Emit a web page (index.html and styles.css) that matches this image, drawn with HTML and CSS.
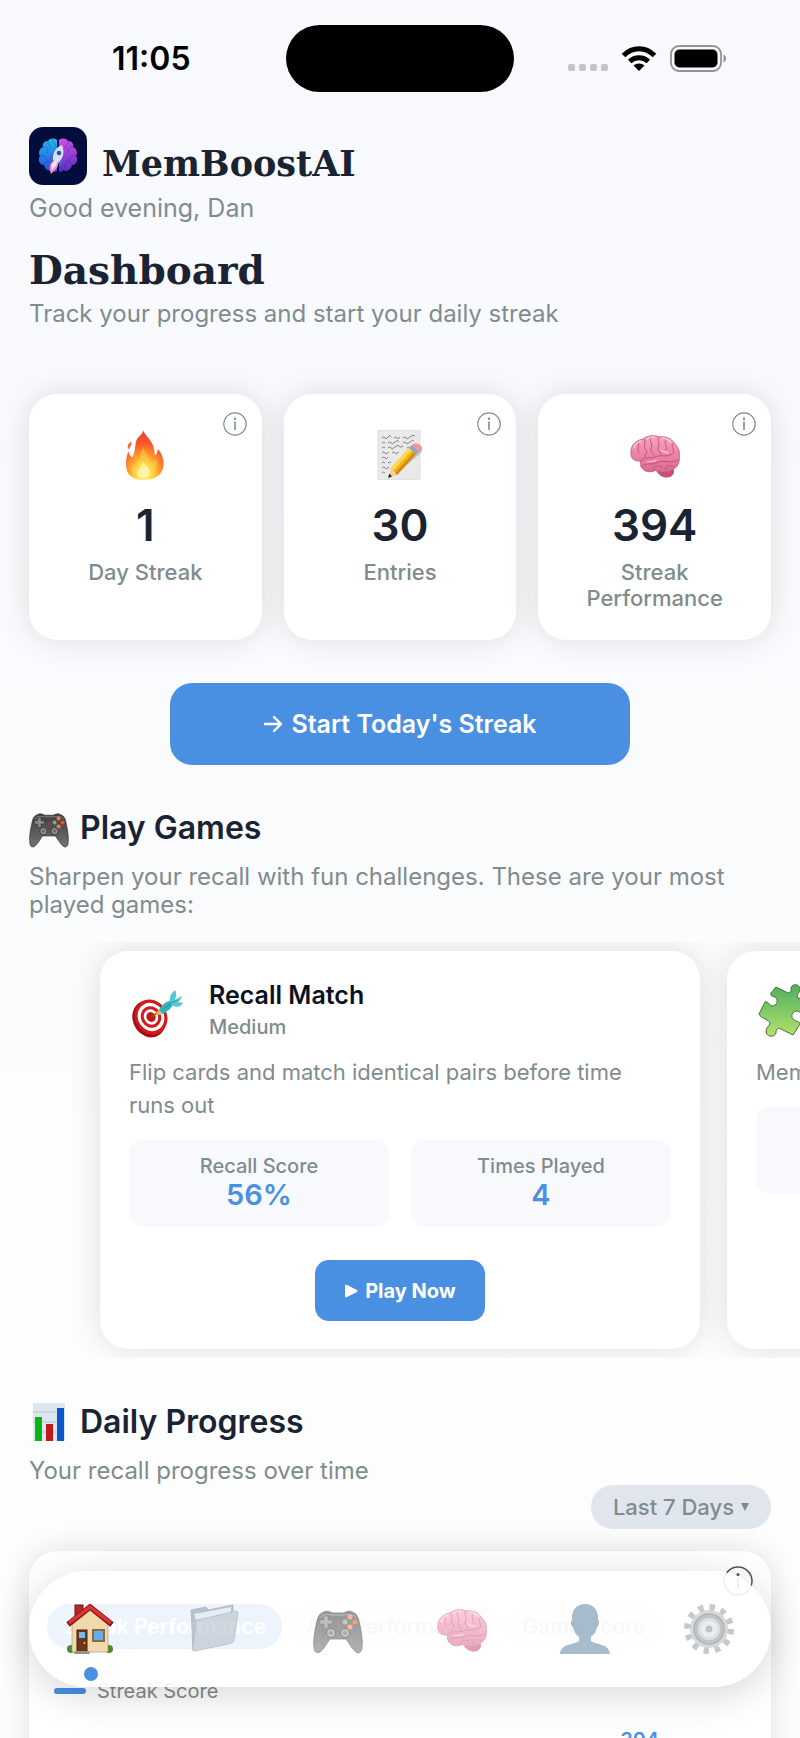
FILE: index.html
```html
<!DOCTYPE html>
<html lang="en">
<head>
    <meta charset="UTF-8">
    <meta name="viewport" content="width=device-width, initial-scale=1.0">
    <title>MemBoostAI</title>
    <link rel="stylesheet" href="styles.css">
</head>
<body>

<!-- Shared icons -->
<svg class="sprite" aria-hidden="true">
    <defs>
        <linearGradient id="brainFill" x1="0" y1="0" x2="0" y2="1">
            <stop offset="0" stop-color="#f9a3bd"/>
            <stop offset="1" stop-color="#d9608a"/>
        </linearGradient>
        <linearGradient id="padFill" x1="0" y1="0" x2="0" y2="1">
            <stop offset="0" stop-color="#3c3c3c"/>
            <stop offset="1" stop-color="#737373"/>
        </linearGradient>
    </defs>
    <symbol id="brain" viewBox="0 0 50 50">
        <path fill="url(#brainFill)" stroke="#c2557a" stroke-width=".8" d="M1 23C0 16 6 10 13 9C18 5 25 5 29 7C36 6 42 9 44 13C49 17 51 25 49 31C49 35 46 38 43 39C45 43 42 47 38 47C33 48 28 44 26 40C21 43 14 42 12 38C10 36 10 33 11 31C5 32 0 28 1 23Z"/>
        <path fill="#c4507b" d="M28 41C33 43 39 42 43 39C45 43 42 47 38 47C33 48 29 45 28 41Z"/>
        <path fill="none" stroke="#c4537c" stroke-width="1" stroke-linecap="round" d="M11 31C14 26 20 29 25 27C31 24 37 28 42 24M12 36C17 32 23 36 29 32C34 30 40 34 48 30M8 13C10 16 6 19 9 23M14 9C17 13 12 17 16 20C18 23 14 25 15 27M21 7C18 11 24 14 21 19C20 22 23 23 24 25M29 7C26 11 31 14 28 18C27 21 31 22 31 25M36 10C33 13 38 16 36 20M43 14C40 18 46 20 43 24M24 40C22 36 29 35 32 37M36 40C34 36 41 34 44 37"/>
        <path fill="none" stroke="#ffd0dd" stroke-width="1.1" stroke-linecap="round" d="M4 18C5 14 8 12 11 11M17 9C19 7 23 7 25 7M32 8C36 8 39 10 41 12M17 32C20 31 23 32 26 30M31 20C33 23 36 21 38 23"/>
    </symbol>
    <symbol id="gamepad" viewBox="0 0 50 50">
        <g transform="translate(0 2)">
            <path fill="url(#padFill)" stroke="#333" stroke-width=".8" d="M11 6C14 4 17 6 20 7H30C33 6 36 4 39 6C43 7 45 10 46 15C48 24 50 33 49 41C49 46 46 48 43 46C39 43 36 37 33 33H17C14 37 11 43 7 46C4 48 1 46 1 41C0 33 2 24 4 15C5 10 7 7 11 6Z"/>
            <path fill="none" stroke="#909090" stroke-width="1" d="M7 12C9 8 14 8 18 9H32C36 8 41 8 43 12"/>
            <path fill="#8b8b8b" stroke="#333" stroke-width=".5" d="M11 10h4v4h4v4h-4v4h-4v-4H7v-4h4z"/>
            <circle cx="37" cy="11" r="2.5" fill="#ff7a3c"/>
            <circle cx="42" cy="16" r="2.5" fill="#f5501e"/>
            <circle cx="32" cy="16" r="2.5" fill="#9a9a9a"/>
            <circle cx="37" cy="21" r="2.5" fill="#ff7a3c"/>
            <circle cx="18" cy="27" r="4.5" fill="#999" stroke="#2b2b2b"/>
            <circle cx="32" cy="27" r="4.5" fill="#999" stroke="#2b2b2b"/>
            <circle cx="18" cy="27" r="2" fill="#666"/>
            <circle cx="32" cy="27" r="2" fill="#666"/>
            <circle cx="25" cy="18" r="1.3" fill="#c33"/>
        </g>
    </symbol>
    <symbol id="info" viewBox="0 0 24 24">
        <circle cx="12" cy="12" r="11.2" fill="none" stroke="currentColor" stroke-width="1.2"/>
        <circle cx="12" cy="6.7" r="1.2" fill="currentColor"/>
        <path stroke="currentColor" stroke-width="1.6" d="M12 9.5V18"/>
    </symbol>
</svg>

<div class="screen">
    <div class="status-bar">
        <span class="time">11:05</span>
        <span class="island"></span>
        <span class="status-icons">
            <span class="signal"><i></i><i></i><i></i><i></i></span>
            <svg width="36" height="27" viewBox="0 0 36 27" aria-hidden="true">
                <g fill="none" stroke="#000" stroke-width="5">
                    <path d="M2.5 10.5C11.5 1.5 24.5 1.5 33.5 10.5"/>
                    <path d="M8.7 16.5C14 11.5 22 11.5 27.3 16.5"/>
                </g>
                <path d="M12.5 20.5C15.5 17.7 20.5 17.7 23.5 20.5L18 26Z"/>
            </svg>
            <svg width="57" height="27" viewBox="0 0 57 27" aria-hidden="true">
                <rect x="1" y="1" width="50" height="25" rx="8" fill="none" stroke="#929294" stroke-width="1.8"/>
                <rect x="4.5" y="4.5" width="43" height="18" rx="5"/>
                <path fill="#929294" d="M53.5 9.5C56.8 10.5 56.8 16.5 53.5 17.5Z"/>
            </svg>
        </span>
    </div>

    <main>
        <header>
            <div class="brand">
                <svg class="logo" viewBox="0 0 58 58" aria-hidden="true">
                    <defs>
                        <linearGradient id="logoLeft" x1="0" y1="0" x2="0" y2="1">
                            <stop offset="0" stop-color="#25b8ee"/>
                            <stop offset="1" stop-color="#2250dd"/>
                        </linearGradient>
                        <linearGradient id="logoRight" x1="0" y1="0" x2="0" y2="1">
                            <stop offset="0" stop-color="#cc4fe6"/>
                            <stop offset="1" stop-color="#5b2cc4"/>
                        </linearGradient>
                    </defs>
                    <rect width="58" height="58" rx="14" fill="#030d3b"/>
                    <path fill="url(#logoLeft)" d="M28 13C24 10 20 12 19 14C15 14 13 17 14 20C10 22 9 26 11 29C8 33 11 38 15 38C16 43 21 45 24 43C26 46 28 45 28 43Z"/>
                    <path fill="url(#logoRight)" d="M30 13C34 10 38 12 39 14C43 14 45 17 44 20C48 22 49 26 47 29C50 33 47 38 43 38C42 43 37 45 34 43C32 46 30 45 30 43Z"/>
                    <g fill="none" stroke="#0b2a86" stroke-width=".6" opacity=".5">
                        <path d="M19 14C18 18 23 19 22 22M14 20C18 19 20 23 18 26M11 29C15 27 18 30 17 33M15 38C15 34 20 33 22 36M24 12C23 16 27 17 27 20"/>
                        <path d="M39 14C40 18 35 19 36 22M44 20C40 19 38 23 40 26M47 29C43 27 40 30 41 33M43 38C43 34 38 33 36 36M37 42C34 40 36 37 38 37"/>
                    </g>
                    <path fill="#ff7fce" d="M25 33C20 36 20 42 22 47C26 43 30 41 29 35Z"/>
                    <path fill="#ffe3ec" d="M25 34C22 37 22 40 23 43C26 40 28 38 28 35Z"/>
                    <path fill="#4a62c4" d="M24 27L20 32L22 36L25 33ZM32 30L34 35L31 39L28 35Z"/>
                    <path fill="#d5e0fb" d="M33 18C27 20 23 27 24 33L29 36C34 32 36 25 33 18Z"/>
                    <circle cx="30" cy="26" r="2.3" fill="#2b4fb4"/>
                </svg>
                <span class="brand-name">MemBoostAI</span>
            </div>
            <p class="greeting">Good evening, Dan</p>
            <h1>Dashboard</h1>
            <p class="subtitle">Track your progress and start your daily streak</p>
        </header>

        <section class="stats">
            <div class="card stat">
                <button class="info-btn" aria-label="About day streak"><svg><use href="#info"/></svg></button>
                <svg class="emoji" viewBox="-5 0 50 51" aria-hidden="true">
                    <defs>
                        <radialGradient id="flame" cx=".48" cy=".9" r=".8">
                            <stop offset="0" stop-color="#fffbb0"/>
                            <stop offset=".25" stop-color="#ffe04a"/>
                            <stop offset=".5" stop-color="#ffa02e"/>
                            <stop offset=".78" stop-color="#fb5a2a"/>
                            <stop offset="1" stop-color="#f0462a"/>
                        </radialGradient>
                    </defs>
                    <path fill="url(#flame)" d="M18 0C20 6 28 11 29 19C30 22 30 25 30 26C32 24 33 22 33 19C39 26 40 34 38 40C36 46 30 51 19 51C8 51 2 46 1 39C0 33 1 27 3 22C4 25 5 27 7 28C11 22 9 15 12 9C15 5 18 4 18 0Z"/>
                    <path fill="#fb6a3c" d="M6 12C7 16 4 17 4 20C1 18 2 14 6 12Z"/>
                    <path fill="#ffd84a" opacity=".45" d="M18 18C20 24 25 27 26 33C30 33 30 30 31 29C34 39 29 50 19 50C9 50 5 42 7 34C8 37 10 38 12 38C16 31 14 24 18 18Z"/>
                    <path fill="#fffbc4" opacity=".7" d="M18 32C21 37 26 40 25 45C23 50 15 50 12 46C11 41 17 38 18 32Z"/>
                </svg>
                <strong>1</strong>
                <span>Day Streak</span>
            </div>
            <div class="card stat">
                <button class="info-btn" aria-label="About entries"><svg><use href="#info"/></svg></button>
                <svg class="emoji" viewBox="0 0 50 50" aria-hidden="true">
                    <rect x="3" y="0" width="42" height="50" fill="#e9e9e9" stroke="#d2d2d2" stroke-width=".6"/>
                    <path fill="none" stroke="#555" stroke-width=".7" d="M7 8q2-2 3 0t3-1 3 0M19 8q2-2 3 0t3-1M28 8q2-2 3 0t4-1 5-1M7 13q2-2 3 0M13 13q2-2 3 0t4-1 4 0M28 13q2-2 3 0t4-1 4-1M7 18q2-2 3 0M13 18q2-2 3 0t4-1 4-1 4 0M32 18q2-2 3 0M7 23q2-2 3 0t4-1M17 23q2-2 3 0t4-1M7 28q2-2 3 0t3-1M7 33q2-2 3 0M13 33q2-2 3 0M7 38q2-2 3 0t4-1M7 43q2-2 3 0"/>
                    <path fill="#777" opacity=".35" d="M18 47L47 22L45 19L25 40Z"/>
                    <path fill="#f2b21c" d="M16 38L36 16L43 22L22 45Z"/>
                    <path fill="#ffd84a" d="M16 38L36 16L39 18L18 41Z"/>
                    <path fill="#d48b10" d="M20 43L41 20L43 22L22 45Z"/>
                    <path fill="#f1cf9b" d="M16 38L22 45L14 47Z"/>
                    <path fill="#222" d="M14.5 43.5L17 46.5L13 48Z"/>
                    <path fill="#8fa5cf" d="M34 18L38 14L45 20L41 24Z"/>
                    <path fill="#f3949b" d="M37 15L41 13Q48 15 47 20L44 22Z"/>
                </svg>
                <strong>30</strong>
                <span>Entries</span>
            </div>
            <div class="card stat">
                <button class="info-btn" aria-label="About streak performance"><svg><use href="#info"/></svg></button>
                <svg class="emoji" aria-hidden="true"><use href="#brain"/></svg>
                <strong>394</strong>
                <span>Streak Performance</span>
            </div>
        </section>

        <button class="start-btn">
            <svg width="20" height="20" viewBox="0 0 20 20" fill="none" stroke="currentColor" stroke-width="2.4" stroke-linecap="round" stroke-linejoin="round" aria-hidden="true"><path d="M2 10H18M11 3L18 10L11 17"/></svg>
            Start Today's Streak
        </button>

        <section>
            <h2><svg aria-hidden="true"><use href="#gamepad"/></svg>Play Games</h2>
            <p class="section-text">Sharpen your recall with fun challenges. These are your most played games:</p>
        </section>
    </main>

    <div class="games">
        <article class="card game">
            <div class="game-head">
                <svg viewBox="0 0 58 58" aria-hidden="true">
                    <ellipse cx="20" cy="38" rx="16" ry="19" transform="rotate(-28 20 38)" fill="#a30d12"/>
                    <g transform="rotate(-28 22 36)">
                        <ellipse cx="22" cy="36" rx="16" ry="18" fill="#d3191e"/>
                        <ellipse cx="22" cy="36" rx="13" ry="14.500" fill="#fff"/>
                        <ellipse cx="22" cy="36" rx="10" ry="11" fill="#d3191e"/>
                        <ellipse cx="22" cy="36" rx="7" ry="8" fill="#fff"/>
                        <ellipse cx="22" cy="36" rx="4.500" ry="5" fill="#c1161b"/>
                    </g>
                    <path stroke="#8a5a12" stroke-width="1.5" d="M22 36L30 31"/>
                    <path fill="#e9b32a" d="M27 31L31 29L32 34L28 34Z"/>
                    <path fill="#35b3c1" d="M30 29C33 23 38 20 43 19L45 22C43 27 38 31 33 33Z"/>
                    <path fill="#54c8d3" d="M41 20C40 15 43 12 46 9C48 13 47 16 46 19L53 15C52 18 51 19 49 21L54 22C52 26 48 27 43 24Z"/>
                    <path fill="none" stroke="#1f8d9b" stroke-width=".8" d="M34 28L44 21L49 19"/>
                </svg>
                <div>
                    <h3>Recall Match</h3>
                    <p>Medium</p>
                </div>
            </div>
            <p class="game-text">Flip cards and match identical pairs before time runs out</p>
            <div class="scores">
                <div><span>Recall Score</span><b>56%</b></div>
                <div><span>Times Played</span><b>4</b></div>
            </div>
            <button class="play-btn">
                <svg width="14" height="14" viewBox="0 0 14 14" fill="currentColor" aria-hidden="true"><path d="M1 2Q1 0 3 1L13 6Q14 7 13 8L3 13Q1 14 1 12Z"/></svg>
                Play Now
            </button>
        </article>
        <article class="card game">
            <div class="game-head">
                <svg viewBox="0 0 58 58" aria-hidden="true">
                    <defs>
                        <linearGradient id="puzzle" x1="0" y1="0" x2="0" y2="1">
                            <stop offset="0" stop-color="#4fae62"/>
                            <stop offset="1" stop-color="#b5e26a"/>
                        </linearGradient>
                    </defs>
                    <path fill="url(#puzzle)" stroke="#42703a" stroke-width="1" d="M20 6L30 11C34 13 36 10 35 7C36 2 44 3 44 8C44 12 40 13 42 17L54 22L49 34C46 35 45 31 41 30C36 30 34 36 38 39C41 41 44 40 44 43L37 54L25 48C21 46 20 49 20 52C18 57 10 56 10 50C10 46 14 45 14 42C14 39 4 37 3 33L9 21C12 20 13 24 16 25C21 25 23 19 19 16C16 15 14 15 15 12Z"/>
                </svg>
                <div>
                    <h3>Memory Grid</h3>
                    <p>Medium</p>
                </div>
            </div>
            <p class="game-text">Memorize and repeat the pattern</p>
            <div class="scores">
                <div><span>Recall Score</span><b>48%</b></div>
                <div><span>Times Played</span><b>3</b></div>
            </div>
        </article>
    </div>

    <section class="progress">
        <h2>
            <svg viewBox="0 0 40 40" aria-hidden="true">
                <rect x="4" y="1" width="32" height="38" fill="#dbe6ee"/>
                <path stroke="#b9c8d3" d="M4 10H36M4 20H36M4 30H36"/>
                <rect x="6" y="15" width="7" height="24" fill="#0db312"/>
                <rect x="17" y="22" width="7" height="17" fill="#c4161c"/>
                <rect x="28" y="6" width="7" height="33" fill="#0d56c8"/>
            </svg>Daily Progress
        </h2>
        <p class="section-text">Your recall progress over time</p>
        <div class="range">
            <select aria-label="Time range">
                <option>Last 7 Days</option>
                <option>Last 30 Days</option>
            </select>
            <span aria-hidden="true"></span>
        </div>
        <div class="card chart">
            <button class="info-btn" aria-label="About progress"><svg><use href="#info"/></svg></button>
            <div class="tabs">
                <button class="active">Streak Performance</button>
                <button>App Performance</button>
                <button>Game Score</button>
            </div>
            <div class="legend"><i></i>Streak Score</div>
            <div class="plot"><span>394</span></div>
        </div>
    </section>
</div>

<nav>
    <a href="#" class="current" aria-label="Home">
        <svg viewBox="0 0 50 50" aria-hidden="true">
            <circle cx="5" cy="45" r="4" fill="#4d8c2b"/>
            <circle cx="43" cy="45" r="4" fill="#4d8c2b"/>
            <rect x="9" y="1" width="8" height="14" fill="#b92626" stroke="#701515"/>
            <path fill="#f1d9ae" stroke="#a98b5c" stroke-width=".6" d="M6 20L24 4L42 20V48H6Z"/>
            <path fill="none" stroke="#7e1717" stroke-width="5.5" d="M2 20.5L24 3L46 20.5"/>
            <path fill="none" stroke="#dc3434" stroke-width="3.5" d="M3 19L24 3L45 19"/>
            <rect x="11" y="26" width="10" height="22" fill="#6e3619" stroke="#4b210c"/>
            <rect x="13" y="28" width="6" height="6" fill="#72b8e8"/>
            <circle cx="18.5" cy="39" r="1" fill="#f4c03d"/>
            <rect x="27" y="26" width="11" height="11" fill="#65aee6" stroke="#8a6840" stroke-width="2"/>
            <path fill="#999085" d="M9 47H23L24 50H8Z"/>
        </svg>
        <i class="dot"></i>
    </a>
    <a href="#" aria-label="Files">
        <svg viewBox="0 0 50 50" aria-hidden="true">
            <path fill="#8c98a8" stroke="#76818f" stroke-width=".8" d="M2 6L17 3L19 6L44 1V38L4 47Z"/>
            <path fill="#dfe5ec" d="M5 10L42 3V9L7 16Z"/>
            <path fill="#b1bac7" stroke="#8792a1" stroke-width=".8" d="M9 16L47 7Q49 7 49 9L45 36Q45 38 43 39L6 47Q4 47 4 45L7 18Q7 16 9 16Z"/>
        </svg>
    </a>
    <a href="#" aria-label="Games"><svg><use href="#gamepad"/></svg></a>
    <a href="#" aria-label="Performance"><svg><use href="#brain"/></svg></a>
    <a href="#" aria-label="Profile">
        <svg viewBox="0 0 50 50" aria-hidden="true">
            <path fill="#5f86a5" d="M25 0C34 0 39 7 38 16C40 17 39 22 37 23C36 29 33 31 31 33V37C36 41 49 39 50 50H0C1 39 14 41 19 37V33C17 31 14 29 13 23C11 22 10 17 12 16C11 7 16 0 25 0Z"/>
        </svg>
    </a>
    <a href="#" aria-label="Settings">
        <svg viewBox="0 0 50 50" aria-hidden="true">
            <circle cx="25" cy="25" r="21.5" fill="none" stroke="#999b9e" stroke-width="7" stroke-dasharray="5.2 6.05"/>
            <circle cx="25" cy="25" r="19" fill="#b4b7ba"/>
            <circle cx="25" cy="25" r="15" fill="#8f979d" stroke="#6f777c" stroke-width="1.5"/>
            <circle cx="25" cy="25" r="12" fill="#bdc2c7" stroke="#848b90"/>
            <circle cx="25" cy="25" r="6" fill="#fff" stroke="#dcdcdc" stroke-width="5"/>
            <circle cx="25" cy="25" r="3.5" fill="#8d9296"/>
        </svg>
    </a>
</nav>

</body>
</html>
```
FILE: styles.css
```css
* {
    box-sizing: border-box;
}
body {
    margin: 0;
    font-family: Inter, "Liberation Sans", sans-serif;
    color: #1a2332;
    background: linear-gradient(#f8f9fd, #fefefe);
}
button, select {
    font-family: inherit;
    border: 0;
    margin: 0;
    padding: 0;
    background: none;
    cursor: pointer;
}
h1, h2, h3, p {
    margin: 0;
}
.sprite {
    position: absolute;
    width: 0;
    height: 0;
}
.screen {
    height: 100vh;
    overflow-x: hidden;
    overflow-y: auto;
    scrollbar-width: none;
}
main {
    padding: 0 29px;
}

/* Status bar */
.status-bar {
    display: grid;
    grid-template-columns: 1fr 228px 1fr;
    align-items: center;
    height: 127px;
    padding: 0 30px 10px;
    color: #000;
}
.time {
    padding-left: 82px;
    font-size: 32px;
    font-weight: 600;
}
.island {
    height: 67px;
    border-radius: 34px;
    background: #000;
}
.status-icons {
    display: flex;
    align-items: center;
    gap: 13px;
    justify-self: end;
    margin-right: 43px;
}
.signal {
    display: flex;
    gap: 4px;
    padding-top: 18px;
}
.signal i {
    width: 7px;
    height: 7px;
    border-radius: 2px;
    background: #c4c5c8;
}

/* Header */
.brand {
    display: flex;
    align-items: flex-end;
    gap: 15px;
}
.logo {
    width: 58px;
    height: 58px;
}
.brand-name {
    font-family: "DejaVu Serif", serif;
    font-size: 35px;
    font-weight: bold;
    line-height: 42px;
}
.greeting {
    margin-top: 8px;
    font-size: 25px;
    line-height: 30px;
    color: #7f8c8d;
}
h1 {
    margin-top: 23px;
    font-family: "DejaVu Serif", serif;
    font-size: 39px;
    line-height: 48px;
}
.subtitle {
    margin-top: 5px;
    font-size: 24px;
    line-height: 30px;
    color: #7f8c8d;
}

/* Cards */
.card {
    position: relative;
    border-radius: 28px;
    background: #fff;
    box-shadow: 0 0 32px rgba(0, 0, 0, .12);
}
.info-btn {
    position: absolute;
    top: 18px;
    right: 15px;
    width: 24px;
    height: 24px;
    color: #7f8c8d;
}
.info-btn svg {
    display: block;
    width: 100%;
    height: 100%;
}
.stats {
    display: grid;
    grid-template-columns: repeat(3, 1fr);
    gap: 22px;
    margin-top: 65px;
}
.stat {
    display: flex;
    flex-direction: column;
    align-items: center;
    padding: 36px 29px 29px;
    text-align: center;
}
.emoji {
    width: 50px;
    height: 50px;
}
.stat strong {
    margin-top: 20px;
    font-size: 44px;
    font-weight: 600;
    line-height: 50px;
}
.stat span {
    margin-top: 9px;
    font-size: 22px;
    font-weight: 500;
    line-height: 26px;
    color: #7f8c8d;
}
.start-btn {
    display: flex;
    align-items: center;
    justify-content: center;
    gap: 8px;
    width: 62%;
    min-width: 330px;
    height: 82px;
    margin: 43px auto;
    border-radius: 22px;
    background: #4a90e2;
    color: #fff;
    font-size: 25px;
    font-weight: 600;
}

/* Sections */
h2 {
    display: flex;
    align-items: center;
    gap: 11px;
    font-size: 32px;
    font-weight: 600;
    line-height: 40px;
}
h2 svg {
    width: 40px;
    height: 40px;
}
.section-text {
    margin-top: 15px;
    font-size: 24px;
    line-height: 28px;
    color: #7f8c8d;
}

/* Game carousel */
.games {
    display: flex;
    gap: 27px;
    margin-top: 23px;
    padding: 9px 12.5vw;
    overflow: hidden;
}
.game {
    flex: 0 0 75vw;
    padding: 29px 29px 28px;
}
.game-head {
    display: flex;
    align-items: center;
    gap: 22px;
    height: 59px;
}
.game-head svg {
    width: 58px;
    height: 58px;
}
h3 {
    font-size: 25px;
    font-weight: 600;
    line-height: 30px;
    color: #0b1120;
}
.game-head p {
    margin-top: 5px;
    font-size: 20px;
    font-weight: 500;
    line-height: 24px;
    color: #7f8c8d;
}
.game-text {
    margin-top: 17px;
    font-size: 22px;
    line-height: 33px;
    color: #7f8c8d;
}
.scores {
    display: grid;
    grid-template-columns: 1fr 1fr;
    gap: 22px;
    margin-top: 18px;
}
.scores div {
    display: flex;
    flex-direction: column;
    align-items: center;
    padding: 14px 10px 15px;
    border-radius: 14px;
    background: #f8f9fd;
}
.scores span {
    font-size: 20px;
    font-weight: 500;
    line-height: 24px;
    color: #7f8c8d;
}
.scores b {
    font-size: 29px;
    font-weight: 600;
    line-height: 34px;
    color: #4a90e2;
}
.play-btn {
    display: flex;
    align-items: center;
    gap: 7px;
    height: 61px;
    margin: 33px auto 0;
    padding: 0 29px;
    border-radius: 14px;
    background: #4a90e2;
    color: #fff;
    font-size: 20px;
    font-weight: 700;
}

/* Daily progress */
.progress {
    padding: 44px 29px 0;
}
.range {
    display: flex;
    align-items: center;
    gap: 7px;
    width: fit-content;
    height: 44px;
    margin-left: auto;
    padding: 0 22px;
    border-radius: 22px;
    background: #e1e6ee;
}
.range select {
    appearance: none;
    field-sizing: content;
    font-size: 22px;
    font-weight: 500;
    color: #7f8c8d;
}
.range span {
    border: 4px solid transparent;
    border-top: 8px solid #7f8c8d;
    border-bottom: 0;
}
.chart {
    margin-top: 22px;
    padding: 53px 18px 150px;
}
.chart .info-btn {
    top: 15px;
    right: 18px;
    width: 30px;
    height: 30px;
    color: #555;
}
.tabs {
    display: flex;
    gap: 8px;
}
.tabs button {
    height: 45px;
    padding: 0 16px;
    border-radius: 22px;
    background: #f0f0f2;
    color: #aab2b3;
    font-size: 21px;
    font-weight: 500;
    white-space: nowrap;
}
.tabs .active {
    background: #4a90e2;
    color: #fff;
    font-weight: 600;
}
.legend {
    display: flex;
    align-items: center;
    gap: 11px;
    margin-top: 30px;
    padding-left: 7px;
    font-size: 20px;
    line-height: 24px;
    color: #7f8c8d;
}
.legend i {
    width: 32px;
    height: 6px;
    border-radius: 3px;
    background: #4a90e2;
}
.plot {
    margin-top: 25px;
    padding-right: 94px;
    text-align: right;
    color: #4a90e2;
    font-size: 20px;
    font-weight: 600;
    line-height: 24px;
}

/* Bottom navigation floats over the page */
nav {
    position: fixed;
    left: 29px;
    right: 29px;
    bottom: 51px;
    display: grid;
    grid-template-columns: repeat(6, 1fr);
    height: 116px;
    border-radius: 58px;
    background: rgba(255, 255, 255, .9);
    box-shadow: 0 8px 40px rgba(0, 0, 0, .16);
}
nav a {
    display: flex;
    flex-direction: column;
    align-items: center;
    padding-top: 33px;
}
nav a > svg {
    width: 50px;
    height: 50px;
    opacity: .55;
}
nav .current svg {
    opacity: 1;
}
.dot {
    width: 14px;
    height: 14px;
    margin-top: 13px;
    border-radius: 50%;
    background: #4a90e2;
}
```
